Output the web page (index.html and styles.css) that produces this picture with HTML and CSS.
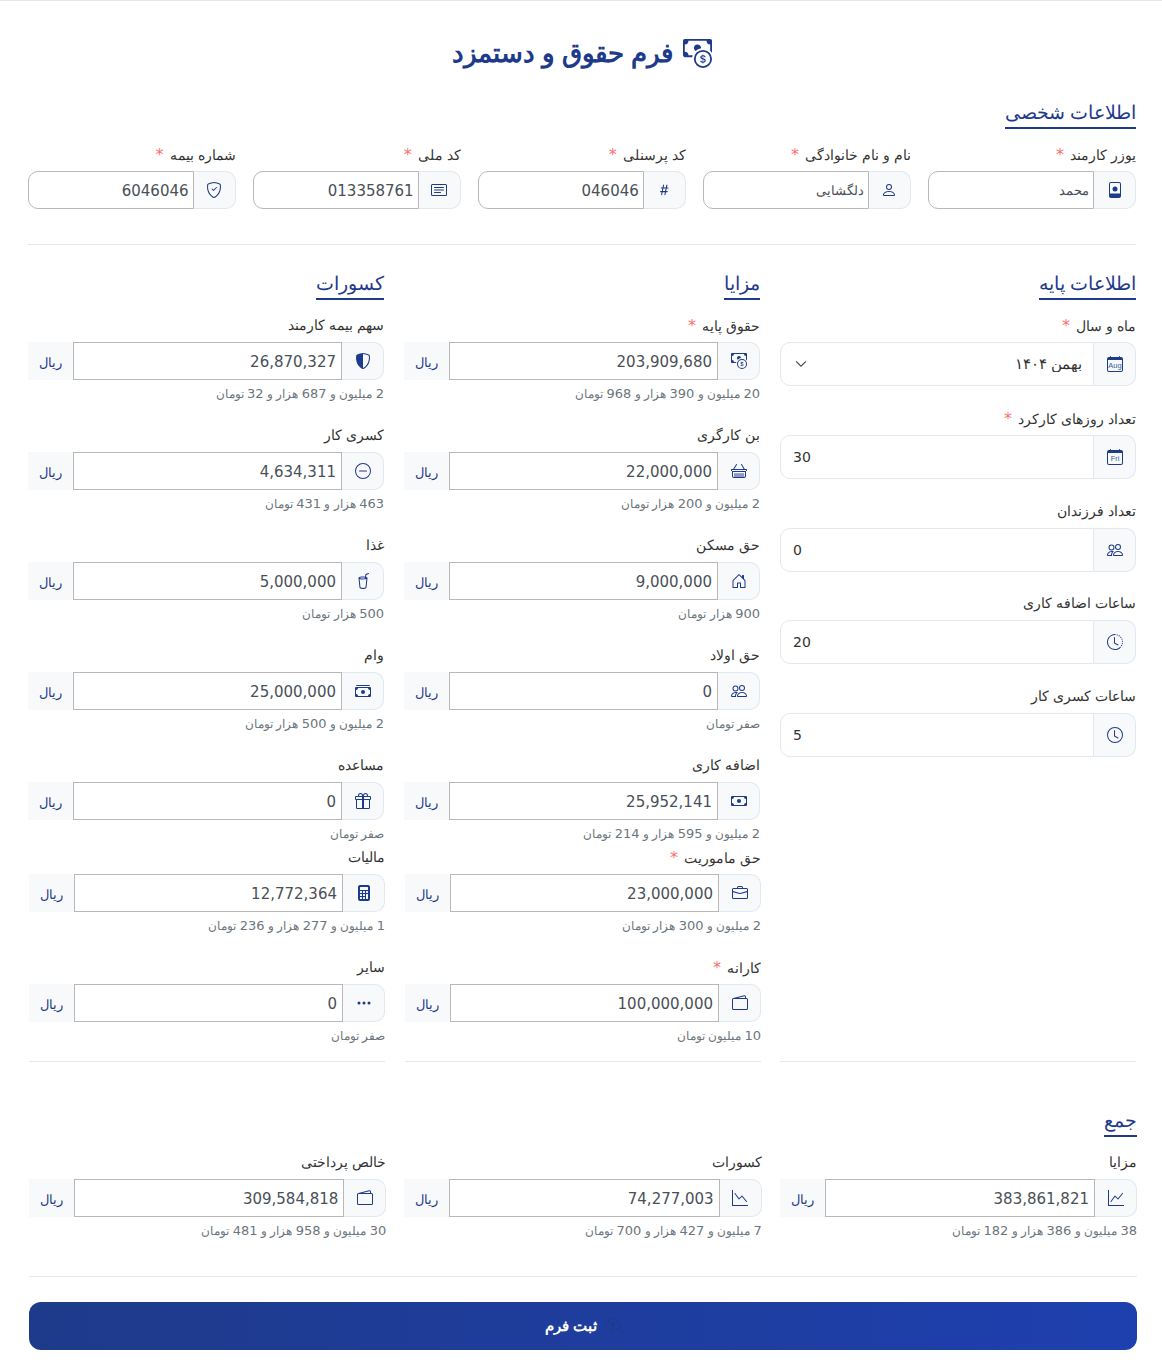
FILE: index.html
```html
<!DOCTYPE html>
<html lang="fa" dir="rtl">
<head>
    <meta charset="UTF-8">
    <meta name="viewport" content="width=device-width, initial-scale=1.0">
    <title>فرم حقوق و دستمزد</title>
    <link rel="stylesheet" href="styles.css">
</head>
<body>

<svg class="sprite" xmlns="http://www.w3.org/2000/svg">
    <symbol id="i-cash-coin" viewBox="0 0 16 16">
        <path fill-rule="evenodd" d="M11 15a4 4 0 1 0 0-8 4 4 0 0 0 0 8m5-4a5 5 0 1 1-10 0 5 5 0 0 1 10 0"/>
        <path d="M9.438 11.944c.047.596.518 1.06 1.363 1.116v.44h.375v-.443c.875-.061 1.386-.529 1.386-1.207 0-.618-.39-.936-1.09-1.1l-.296-.07v-1.2c.376.043.614.248.671.532h.658c-.047-.575-.54-1.024-1.329-1.073V8.5h-.375v.45c-.747.073-1.255.522-1.255 1.158 0 .562.378.92 1.007 1.066l.248.061v1.272c-.384-.058-.639-.27-.696-.563h-.668zm1.36-1.354c-.369-.085-.569-.26-.569-.522 0-.294.216-.514.572-.578v1.1zm.432.746c.449.104.655.272.655.569 0 .339-.257.571-.709.614v-1.195z"/>
        <path d="M1 0a1 1 0 0 0-1 1v8a1 1 0 0 0 1 1h4.083q.088-.517.258-1H3a2 2 0 0 0-2-2V3a2 2 0 0 0 2-2h10a2 2 0 0 0 2 2v3.528c.38.34.717.728 1 1.154V1a1 1 0 0 0-1-1z"/>
        <path d="M9.998 5.083 10 5a2 2 0 1 0-3.132 1.65 6 6 0 0 1 3.13-1.567"/>
    </symbol>
    <symbol id="i-badge" viewBox="0 0 16 16">
        <path fill-rule="evenodd" d="M4 0h8a2 2 0 0 1 2 2v12a2 2 0 0 1-2 2H4a2 2 0 0 1-2-2V2a2 2 0 0 1 2-2m0 1a1 1 0 0 0-1 1v9.500h10V2a1 1 0 0 0-1-1z"/>
        <circle cx="8" cy="7" r="2.500"/>
    </symbol>
    <symbol id="i-person" viewBox="0 0 16 16">
        <path d="M8 8a3 3 0 1 0 0-6 3 3 0 0 0 0 6m2-3a2 2 0 1 1-4 0 2 2 0 0 1 4 0m4 8c0 1-1 1-1 1H3s-1 0-1-1 1-4 6-4 6 3 6 4m-1-.004c-.001-.246-.154-.986-.832-1.664C11.516 10.68 10.289 10 8 10s-3.516.68-4.168 1.332c-.678.678-.83 1.418-.832 1.664z"/>
    </symbol>
    <symbol id="i-hash" viewBox="0 0 16 16">
        <path d="M8.390 12.648a1 1 0 0 0-.015.18c0 .305.21.508.5.508.266 0 .492-.172.555-.477l.554-2.703h1.204c.421 0 .617-.234.617-.547 0-.312-.188-.53-.617-.53h-.985l.516-2.524h1.265c.43 0 .618-.227.618-.547 0-.313-.188-.524-.618-.524h-1.046l.476-2.304a1 1 0 0 0 .016-.164.51.51 0 0 0-.516-.516.54.54 0 0 0-.539.43l-.523 2.554H7.617l.477-2.304c.008-.04.015-.118.015-.164a.51.51 0 0 0-.523-.516.54.54 0 0 0-.531.43L6.530 5.484H5.414c-.43 0-.617.22-.617.532s.187.539.617.539h.906l-.515 2.523H4.609c-.421 0-.609.219-.609.531s.188.547.61.547h.976l-.516 2.492c-.008.04-.015.125-.015.18 0 .305.21.508.5.508.265 0 .492-.172.554-.477l.555-2.703h2.242zm-1-6.109h2.266l-.515 2.563H6.859l.532-2.563z"/>
    </symbol>
    <symbol id="i-card-text" viewBox="0 0 16 16">
        <path d="M14.500 3a.5.5 0 0 1 .5.5v9a.5.5 0 0 1-.5.5h-13a.5.5 0 0 1-.5-.5v-9a.5.5 0 0 1 .5-.5zm-13-1A1.500 1.500 0 0 0 0 3.500v9A1.500 1.500 0 0 0 1.500 14h13a1.500 1.500 0 0 0 1.500-1.500v-9A1.500 1.500 0 0 0 14.500 2z"/>
        <path d="M3 5.500a.5.5 0 0 1 .5-.5h9a.5.5 0 0 1 0 1h-9a.5.5 0 0 1-.5-.5M3 8a.5.5 0 0 1 .5-.5h9a.5.5 0 0 1 0 1h-9A.5.5 0 0 1 3 8m0 2.500a.5.5 0 0 1 .5-.5h6a.5.5 0 0 1 0 1h-6a.5.5 0 0 1-.5-.5"/>
    </symbol>
    <symbol id="i-shield-check" viewBox="0 0 16 16">
        <path d="M5.338 1.590a61 61 0 0 0-2.837.856.48.48 0 0 0-.328.39c-.554 4.157.726 7.19 2.253 9.188a10.700 10.700 0 0 0 2.287 2.233c.346.244.652.42.893.533q.18.085.293.118a1 1 0 0 0 .101.025 1 1 0 0 0 .1-.025q.114-.034.294-.118c.24-.113.547-.29.893-.533a10.700 10.700 0 0 0 2.287-2.233c1.527-1.997 2.807-5.031 2.253-9.188a.48.48 0 0 0-.328-.39c-.651-.213-1.750-.56-2.837-.855C9.552 1.290 8.531 1.067 8 1.067c-.53 0-1.552.223-2.662.524zM5.072.56C6.157.265 7.310 0 8 0s1.843.265 2.928.56c1.110.3 2.229.655 2.887.87a1.540 1.540 0 0 1 1.044 1.262c.596 4.477-.787 7.795-2.465 9.990a11.800 11.800 0 0 1-2.517 2.453 7 7 0 0 1-1.048.625c-.28.132-.581.24-.829.24s-.548-.108-.829-.24a7 7 0 0 1-1.048-.625 11.800 11.800 0 0 1-2.517-2.453C1.928 10.487.545 7.169 1.141 2.692A1.540 1.540 0 0 1 2.185 1.430 63 63 0 0 1 5.072.56"/>
        <path d="M10.854 5.146a.5.5 0 0 1 0 .708l-3 3a.5.5 0 0 1-.708 0l-1.500-1.500a.5.5 0 1 1 .708-.708L7.500 7.793l2.646-2.647a.5.5 0 0 1 .708 0"/>
    </symbol>
    <symbol id="i-calendar" viewBox="0 0 16 16">
        <path d="M3.500 0a.5.5 0 0 1 .5.5V1h8V.5a.5.5 0 0 1 1 0V1h1a2 2 0 0 1 2 2v11a2 2 0 0 1-2 2H2a2 2 0 0 1-2-2V3a2 2 0 0 1 2-2h1V.5a.5.5 0 0 1 .5-.5M1 4v10a1 1 0 0 0 1 1h12a1 1 0 0 0 1-1V4z"/>
    </symbol>
    <symbol id="i-people" viewBox="0 0 16 16">
        <path d="M15 14s1 0 1-1-1-4-5-4-5 3-5 4 1 1 1 1zm-7.978-1L7 12.996c.001-.264.167-1.030.76-1.720C8.312 10.629 9.282 10 11 10c1.717 0 2.687.63 3.240 1.276.593.69.758 1.457.76 1.720l-.008.002-.014.002zM11 7a2 2 0 1 0 0-4 2 2 0 0 0 0 4m3-2a3 3 0 1 1-6 0 3 3 0 0 1 6 0M6.936 9.280a6 6 0 0 0-1.230-.247A7 7 0 0 0 5 9c-4 0-5 3-5 4q0 1 1 1h4.216A2.240 2.240 0 0 1 5 13c0-1.010.377-2.042 1.090-2.904.243-.294.526-.569.846-.816M4.920 10A5.500 5.500 0 0 0 4 13H1c0-.26.164-1.030.76-1.724.545-.636 1.492-1.256 3.160-1.275ZM1.500 5.500a3 3 0 1 1 6 0 3 3 0 0 1-6 0m3-2a2 2 0 1 0 0 4 2 2 0 0 0 0-4"/>
    </symbol>
    <symbol id="i-clock-history" viewBox="0 0 16 16">
        <path d="M8.515 1.019A7 7 0 0 0 8 1V0a8 8 0 0 1 .589.022zm2.004.45a7 7 0 0 0-.985-.299l.219-.976q.576.129 1.126.342zm1.370.71a7 7 0 0 0-.439-.27l.493-.87a8 8 0 0 1 .979.654l-.615.789a7 7 0 0 0-.418-.302zm1.834 1.790a7 7 0 0 0-.653-.796l.724-.69q.406.429.747.91zm.744 1.352a7 7 0 0 0-.214-.468l.893-.45a8 8 0 0 1 .45 1.088l-.95.313a7 7 0 0 0-.179-.483m.53 2.507a7 7 0 0 0-.1-1.025l.985-.17q.1.58.116 1.170zm-.131 1.538q.05-.254.081-.51l.993.123a8 8 0 0 1-.23 1.155l-.964-.267q.069-.247.12-.501m-.952 2.379q.276-.436.486-.908l.914.405q-.24.54-.555 1.038zm-.964 1.205q.183-.183.35-.378l.758.653a8 8 0 0 1-.401.432z"/>
        <path d="M8 1a7 7 0 1 0 4.950 11.950l.707.707A8.001 8.001 0 1 1 8 0z"/>
        <path d="M7.500 3a.5.5 0 0 1 .5.5v5.210l3.248 1.856a.5.5 0 0 1-.496.868l-3.500-2A.5.5 0 0 1 7 9V3.500a.5.5 0 0 1 .5-.5"/>
    </symbol>
    <symbol id="i-clock" viewBox="0 0 16 16">
        <path d="M8 3.500a.5.5 0 0 0-1 0V9a.5.5 0 0 0 .252.434l3.500 2a.5.5 0 0 0 .496-.868L8 8.710z"/>
        <path d="M8 16A8 8 0 1 0 8 0a8 8 0 0 0 0 16m7-8A7 7 0 1 1 1 8a7 7 0 0 1 14 0"/>
    </symbol>
    <symbol id="i-basket" viewBox="0 0 16 16">
        <path d="M5.757 1.071a.5.5 0 0 1 .172.686L3.383 6h9.234L10.070 1.757a.5.5 0 1 1 .858-.514L13.783 6H15.500a.5.5 0 0 1 .5.5v1a.5.5 0 0 1-.5.5H15v5a2 2 0 0 1-2 2H3a2 2 0 0 1-2-2V8H.5a.5.5 0 0 1-.5-.5v-1A.5.5 0 0 1 .5 6h1.717L5.070 1.243a.5.5 0 0 1 .686-.172zM2 9v4a1 1 0 0 0 1 1h10a1 1 0 0 0 1-1V9zM1 7v1h14V7zm3 3a.5.5 0 0 1 .5.5v3a.5.5 0 0 1-1 0v-3A.5.5 0 0 1 4 10m2 0a.5.5 0 0 1 .5.5v3a.5.5 0 0 1-1 0v-3A.5.5 0 0 1 6 10m2 0a.5.5 0 0 1 .5.5v3a.5.5 0 0 1-1 0v-3A.5.5 0 0 1 8 10m2 0a.5.5 0 0 1 .5.5v3a.5.5 0 0 1-1 0v-3a.5.5 0 0 1 .5-.5m2 0a.5.5 0 0 1 .5.5v3a.5.5 0 0 1-1 0v-3a.5.5 0 0 1 .5-.5"/>
    </symbol>
    <symbol id="i-house" viewBox="0 0 16 16">
        <path d="M8.354 1.146a.5.5 0 0 0-.708 0l-6 6A.5.5 0 0 0 1.500 7.500v7a.5.5 0 0 0 .5.5h4.500a.5.5 0 0 0 .5-.5v-4h2v4a.5.5 0 0 0 .5.5H14a.5.5 0 0 0 .5-.5v-7a.5.5 0 0 0-.146-.354L13 5.793V2.500a.5.5 0 0 0-.5-.5h-1a.5.5 0 0 0-.5.5v1.293zM2.500 14V7.707l5.500-5.500 5.500 5.500V14H10v-4a.5.5 0 0 0-.5-.5h-3a.5.5 0 0 0-.5.5v4z"/>
    </symbol>
    <symbol id="i-cash" viewBox="0 0 16 16">
        <path d="M8 10a2 2 0 1 0 0-4 2 2 0 0 0 0 4"/>
        <path d="M0 4a1 1 0 0 1 1-1h14a1 1 0 0 1 1 1v8a1 1 0 0 1-1 1H1a1 1 0 0 1-1-1zm3 0a2 2 0 0 1-2 2v4a2 2 0 0 1 2 2h10a2 2 0 0 1 2-2V6a2 2 0 0 1-2-2z"/>
    </symbol>
    <symbol id="i-cash-stack" viewBox="0 0 16 16">
        <path d="M1 3a1 1 0 0 1 1-1h12a1 1 0 0 1 1 1zm7 8a2 2 0 1 0 0-4 2 2 0 0 0 0 4"/>
        <path d="M0 5a1 1 0 0 1 1-1h14a1 1 0 0 1 1 1v8a1 1 0 0 1-1 1H1a1 1 0 0 1-1-1zm3 0a2 2 0 0 1-2 2v4a2 2 0 0 1 2 2h10a2 2 0 0 1 2-2V7a2 2 0 0 1-2-2z"/>
    </symbol>
    <symbol id="i-briefcase" viewBox="0 0 16 16">
        <path d="M6.500 1A1.500 1.500 0 0 0 5 2.500V3H1.500A1.500 1.500 0 0 0 0 4.500v8A1.500 1.500 0 0 0 1.500 14h13a1.500 1.500 0 0 0 1.500-1.500v-8A1.500 1.500 0 0 0 14.500 3H11v-.5A1.500 1.500 0 0 0 9.500 1zm0 1h3a.5.5 0 0 1 .5.5V3H6v-.5a.5.5 0 0 1 .5-.5m1.886 6.914L15 7.151V12.500a.5.5 0 0 1-.5.5h-13a.5.5 0 0 1-.5-.5V7.150l6.614 1.764a1.500 1.500 0 0 0 .772 0M1.500 4h13a.5.5 0 0 1 .5.5v1.616L8.129 7.948a.5.5 0 0 1-.258 0L1 6.116V4.500a.5.5 0 0 1 .5-.5"/>
    </symbol>
    <symbol id="i-wallet" viewBox="0 0 16 16">
        <path d="M12.136.326A1.500 1.500 0 0 1 14 1.780V3h.5A1.500 1.500 0 0 1 16 4.500v9a1.500 1.500 0 0 1-1.500 1.500h-13A1.500 1.500 0 0 1 0 13.500v-9a1.500 1.500 0 0 1 1.432-1.499zM5.562 3H13V1.780a.5.5 0 0 0-.621-.484zM1.500 4a.5.5 0 0 0-.5.5v9a.5.5 0 0 0 .5.5h13a.5.5 0 0 0 .5-.5v-9a.5.5 0 0 0-.5-.5z"/>
    </symbol>
    <symbol id="i-shield-shaded" viewBox="0 0 16 16">
        <path fill-rule="evenodd" d="M8 14.933a1 1 0 0 0 .1-.025q.114-.034.294-.118c.24-.113.547-.29.893-.533a10.700 10.700 0 0 0 2.287-2.233c1.527-1.997 2.807-5.031 2.253-9.188a.48.48 0 0 0-.328-.39c-.651-.213-1.750-.56-2.837-.855C9.552 1.290 8.531 1.067 8 1.067zM5.072.56C6.157.265 7.310 0 8 0s1.843.265 2.928.56c1.110.3 2.229.655 2.887.87a1.540 1.540 0 0 1 1.044 1.262c.596 4.477-.787 7.795-2.465 9.990a11.800 11.800 0 0 1-2.517 2.453 7 7 0 0 1-1.048.625c-.28.132-.581.24-.829.24s-.548-.108-.829-.24a7 7 0 0 1-1.048-.625 11.800 11.800 0 0 1-2.517-2.453C1.928 10.487.545 7.169 1.141 2.692A1.540 1.540 0 0 1 2.185 1.430 63 63 0 0 1 5.072.56"/>
    </symbol>
    <symbol id="i-dash-circle" viewBox="0 0 16 16">
        <path d="M8 15A7 7 0 1 1 8 1a7 7 0 0 1 0 14m0 1A8 8 0 1 0 8 0a8 8 0 0 0 0 16"/>
        <path d="M4 8a.5.5 0 0 1 .5-.5h7a.5.5 0 0 1 0 1h-7A.5.5 0 0 1 4 8"/>
    </symbol>
    <symbol id="i-cup-straw" viewBox="0 0 16 16">
        <path d="M13.902.334a.5.5 0 0 1-.28.65l-2.254.902-.4 1.927c.376.095.715.215.972.367.228.135.56.396.56.82q0 .069-.011.132l-.962 9.068a1.280 1.280 0 0 1-.524.93c-.488.34-1.494.87-3.010.87s-2.522-.53-3.010-.87a1.280 1.280 0 0 1-.524-.93L3.510 5.132A1 1 0 0 1 3.500 5c0-.424.332-.685.56-.82.262-.154.607-.276.99-.372C5.824 3.614 6.867 3.500 8 3.500c.712 0 1.389.045 1.985.127l.464-2.215a.5.5 0 0 1 .303-.356l2.500-1a.5.5 0 0 1 .65.278M9.768 4.607A14 14 0 0 0 8 4.500c-1.076 0-2.033.11-2.707.278A3.300 3.300 0 0 0 4.645 5c.146.073.362.15.648.222C5.967 5.390 6.924 5.500 8 5.500c.571 0 1.109-.03 1.588-.085zm.292 1.756C9.445 6.450 8.742 6.500 8 6.500c-1.133 0-2.176-.114-2.950-.308a6 6 0 0 1-.435-.127l.838 8.030c.013.121.06.186.102.215.357.249 1.168.69 2.438.69s2.081-.441 2.438-.69c.042-.029.09-.094.102-.215l.852-8.030a6 6 0 0 1-.435.127 9 9 0 0 1-.89.17z"/>
    </symbol>
    <symbol id="i-gift" viewBox="0 0 16 16">
        <path d="M3 2.500a2.500 2.500 0 0 1 5 0 2.500 2.500 0 0 1 5 0v.006c0 .07 0 .27-.038.494H15a1 1 0 0 1 1 1v2a1 1 0 0 1-1 1v7.500a1.500 1.500 0 0 1-1.500 1.500h-11A1.500 1.500 0 0 1 1 14.500V7a1 1 0 0 1-1-1V4a1 1 0 0 1 1-1h2.038A3 3 0 0 1 3 2.506zm1.068.5H7v-.5a1.500 1.500 0 1 0-3 0c0 .085.002.274.045.43zM9 3h2.932l.023-.07c.043-.156.045-.345.045-.43a1.500 1.500 0 0 0-3 0zM1 4v2h6V4zm8 0v2h6V4zm5 3H9v8h4.500a.5.5 0 0 0 .5-.5zm-7 8V7H2v7.500a.5.5 0 0 0 .5.5z"/>
    </symbol>
    <symbol id="i-calculator" viewBox="0 0 16 16">
        <path d="M2 2a2 2 0 0 1 2-2h8a2 2 0 0 1 2 2v12a2 2 0 0 1-2 2H4a2 2 0 0 1-2-2zm2 .5v2a.5.5 0 0 0 .5.5h7a.5.5 0 0 0 .5-.5v-2a.5.5 0 0 0-.5-.5h-7a.5.5 0 0 0-.5.5m0 4v1a.5.5 0 0 0 .5.5h1a.5.5 0 0 0 .5-.5v-1a.5.5 0 0 0-.5-.5h-1a.5.5 0 0 0-.5.5M4.500 9a.5.5 0 0 0-.5.5v1a.5.5 0 0 0 .5.5h1a.5.5 0 0 0 .5-.5v-1a.5.5 0 0 0-.5-.5zM4 12.500v1a.5.5 0 0 0 .5.5h1a.5.5 0 0 0 .5-.5v-1a.5.5 0 0 0-.5-.5h-1a.5.5 0 0 0-.5.5M7.500 6a.5.5 0 0 0-.5.5v1a.5.5 0 0 0 .5.5h1a.5.5 0 0 0 .5-.5v-1a.5.5 0 0 0-.5-.5zM7 9.500v1a.5.5 0 0 0 .5.5h1a.5.5 0 0 0 .5-.5v-1a.5.5 0 0 0-.5-.5h-1a.5.5 0 0 0-.5.5m.5 2.500a.5.5 0 0 0-.5.5v1a.5.5 0 0 0 .5.5h1a.5.5 0 0 0 .5-.5v-1a.5.5 0 0 0-.5-.5zM10 6.500v1a.5.5 0 0 0 .5.5h1a.5.5 0 0 0 .5-.5v-1a.5.5 0 0 0-.5-.5h-1a.5.5 0 0 0-.5.5m.5 2.500a.5.5 0 0 0-.5.5v4a.5.5 0 0 0 .5.5h1a.5.5 0 0 0 .5-.5v-4a.5.5 0 0 0-.5-.5z"/>
    </symbol>
    <symbol id="i-three-dots" viewBox="0 0 16 16">
        <path d="M3 9.500a1.500 1.500 0 1 1 0-3 1.500 1.500 0 0 1 0 3m5 0a1.500 1.500 0 1 1 0-3 1.500 1.500 0 0 1 0 3m5 0a1.500 1.500 0 1 1 0-3 1.500 1.500 0 0 1 0 3"/>
    </symbol>
    <symbol id="i-graph-up" viewBox="0 0 16 16">
        <path d="M0 0h1v15h15v1H0zm14.817 3.113a.5.5 0 0 1 .07.704l-4.500 5.500a.5.5 0 0 1-.74.037L7.060 6.767l-3.656 5.027a.5.5 0 0 1-.808-.588l4-5.500a.5.5 0 0 1 .758-.06l2.609 2.610 4.150-5.073a.5.5 0 0 1 .704-.07"/>
    </symbol>
    <symbol id="i-graph-down" viewBox="0 0 16 16">
        <path d="M0 0h1v15h15v1H0zm14.817 11.887a.5.5 0 0 0 .07-.704l-4.500-5.500a.5.5 0 0 0-.74-.037L7.060 8.233 3.404 3.206a.5.5 0 0 0-.808.588l4 5.500a.5.5 0 0 0 .758.06l2.609-2.610 4.150 5.073a.5.5 0 0 0 .704.07"/>
    </symbol>
    <symbol id="i-cloud-upload" viewBox="0 0 16 16">
        <path d="M4.406 1.342A5.530 5.530 0 0 1 8 0c2.690 0 4.923 2 5.166 4.579C14.758 4.804 16 6.137 16 7.773 16 9.569 14.502 11 12.687 11H10a.5.5 0 0 1 0-1h2.688C13.979 10 15 8.988 15 7.773c0-1.216-1.020-2.228-2.313-2.228h-.5v-.5C12.188 2.825 10.328 1 8 1a4.530 4.530 0 0 0-2.941 1.100c-.757.652-1.153 1.438-1.153 2.055v.448l-.445.049C2.064 4.805 1 5.952 1 7.318 1 8.785 2.230 10 3.781 10H6a.5.5 0 0 1 0 1H3.781C1.708 11 0 9.366 0 7.318c0-1.763 1.266-3.223 2.942-3.593.143-.863.698-1.723 1.464-2.383"/>
        <path d="M7.646 4.146a.5.5 0 0 1 .708 0l3 3a.5.5 0 0 1-.708.708L8.500 5.707V14.500a.5.5 0 0 1-1 0V5.707L5.354 7.854a.5.5 0 1 1-.708-.708z"/>
    </symbol>
    <symbol id="i-chevron" viewBox="0 0 16 16">
        <path fill-rule="evenodd" d="M1.646 4.646a.5.5 0 0 1 .708 0L8 10.293l5.646-5.647a.5.5 0 0 1 .708.708l-6 6a.5.5 0 0 1-.708 0l-6-6a.5.5 0 0 1 0-.708"/>
    </symbol>
</svg>

<form class="card">
    <h1 class="page-title">
        <svg class="title-icon"><use href="#i-cash-coin"/></svg>
        <span>فرم حقوق و دستمزد</span>
    </h1>

    <h2 class="section-title">اطلاعات شخصی</h2>
    <div class="personal-grid">
        <div class="field">
            <label>یوزر کارمند <span class="req">*</span></label>
            <div class="group"><span class="addon"><svg class="icon"><use href="#i-badge"/></svg></span><input class="control" value="محمد"></div>
        </div>
        <div class="field">
            <label>نام و نام خانوادگی <span class="req">*</span></label>
            <div class="group"><span class="addon"><svg class="icon"><use href="#i-person"/></svg></span><input class="control" value="دلگشایی"></div>
        </div>
        <div class="field">
            <label>کد پرسنلی <span class="req">*</span></label>
            <div class="group"><span class="addon"><svg class="icon"><use href="#i-hash"/></svg></span><input class="control num" value="046046"></div>
        </div>
        <div class="field">
            <label>کد ملی <span class="req">*</span></label>
            <div class="group"><span class="addon"><svg class="icon"><use href="#i-card-text"/></svg></span><input class="control num" value="013358761"></div>
        </div>
        <div class="field">
            <label>شماره بیمه <span class="req">*</span></label>
            <div class="group"><span class="addon"><svg class="icon"><use href="#i-shield-check"/></svg></span><input class="control num" value="6046046"></div>
        </div>
    </div>

    <hr class="divider personal-divider">

    <div class="columns">
        <!-- base info -->
        <div class="col">
            <h2 class="section-title">اطلاعات پایه</h2>
            <div class="base-field">
                <label>ماه و سال <span class="req">*</span></label>
                <div class="group tall">
                    <span class="addon"><svg class="icon"><use href="#i-calendar"/></svg><svg class="cal-text" viewBox="0 0 16 16"><text x="8" y="11.800">Aug</text></svg></span>
                    <select class="control"><option>بهمن ۱۴۰۴</option></select>
                    <svg class="chevron"><use href="#i-chevron"/></svg>
                </div>
            </div>
            <div class="base-field">
                <label>تعداد روزهای کارکرد <span class="req">*</span></label>
                <div class="group tall">
                    <span class="addon"><svg class="icon"><use href="#i-calendar"/></svg><svg class="cal-text" viewBox="0 0 16 16"><text x="8" y="11.800">Fri</text></svg></span>
                    <input class="control num" value="30">
                </div>
            </div>
            <div class="base-field">
                <label>تعداد فرزندان</label>
                <div class="group tall"><span class="addon"><svg class="icon"><use href="#i-people"/></svg></span><input class="control num" value="0"></div>
            </div>
            <div class="base-field">
                <label>ساعات اضافه کاری</label>
                <div class="group tall"><span class="addon"><svg class="icon"><use href="#i-clock-history"/></svg></span><input class="control num" value="20"></div>
            </div>
            <div class="base-field">
                <label>ساعات کسری کار</label>
                <div class="group tall"><span class="addon"><svg class="icon"><use href="#i-clock"/></svg></span><input class="control num" value="5"></div>
            </div>
            <hr class="divider col-divider shifted">
        </div>

        <!-- benefits -->
        <div class="col">
            <h2 class="section-title">مزایا</h2>
            <div class="field money">
                <label>حقوق پایه <span class="req">*</span></label>
                <div class="group"><span class="addon"><svg class="icon"><use href="#i-cash-coin"/></svg></span><input class="control num" value="203,909,680"><span class="unit">ریال</span></div>
                <p class="hint"><span class="num">20</span> میلیون و <span class="num">390</span> هزار و <span class="num">968</span> تومان</p>
            </div>
            <div class="field money">
                <label>بن کارگری</label>
                <div class="group"><span class="addon"><svg class="icon"><use href="#i-basket"/></svg></span><input class="control num" value="22,000,000"><span class="unit">ریال</span></div>
                <p class="hint"><span class="num">2</span> میلیون و <span class="num">200</span> هزار تومان</p>
            </div>
            <div class="field money">
                <label>حق مسکن</label>
                <div class="group"><span class="addon"><svg class="icon"><use href="#i-house"/></svg></span><input class="control num" value="9,000,000"><span class="unit">ریال</span></div>
                <p class="hint"><span class="num">900</span> هزار تومان</p>
            </div>
            <div class="field money">
                <label>حق اولاد</label>
                <div class="group"><span class="addon"><svg class="icon"><use href="#i-people"/></svg></span><input class="control num" value="0"><span class="unit">ریال</span></div>
                <p class="hint">صفر تومان</p>
            </div>
            <div class="field">
                <label>اضافه کاری</label>
                <div class="group"><span class="addon"><svg class="icon"><use href="#i-cash"/></svg></span><input class="control num" value="25,952,141"><span class="unit">ریال</span></div>
                <p class="hint"><span class="num">2</span> میلیون و <span class="num">595</span> هزار و <span class="num">214</span> تومان</p>
            </div>
            <div class="shifted">
                <div class="field money">
                    <label>حق ماموریت <span class="req">*</span></label>
                    <div class="group"><span class="addon"><svg class="icon"><use href="#i-briefcase"/></svg></span><input class="control num" value="23,000,000"><span class="unit">ریال</span></div>
                    <p class="hint"><span class="num">2</span> میلیون و <span class="num">300</span> هزار تومان</p>
                </div>
                <div class="field">
                    <label>کارانه <span class="req">*</span></label>
                    <div class="group"><span class="addon"><svg class="icon"><use href="#i-wallet"/></svg></span><input class="control num" value="100,000,000"><span class="unit">ریال</span></div>
                    <p class="hint"><span class="num">10</span> میلیون تومان</p>
                </div>
                <hr class="divider col-divider">
            </div>
        </div>

        <!-- deductions -->
        <div class="col">
            <h2 class="section-title">کسورات</h2>
            <div class="field money">
                <label>سهم بیمه کارمند</label>
                <div class="group"><span class="addon"><svg class="icon"><use href="#i-shield-shaded"/></svg></span><input class="control num" value="26,870,327"><span class="unit">ریال</span></div>
                <p class="hint"><span class="num">2</span> میلیون و <span class="num">687</span> هزار و <span class="num">32</span> تومان</p>
            </div>
            <div class="field money">
                <label>کسری کار</label>
                <div class="group"><span class="addon"><svg class="icon"><use href="#i-dash-circle"/></svg></span><input class="control num" value="4,634,311"><span class="unit">ریال</span></div>
                <p class="hint"><span class="num">463</span> هزار و <span class="num">431</span> تومان</p>
            </div>
            <div class="field money">
                <label>غذا</label>
                <div class="group"><span class="addon"><svg class="icon"><use href="#i-cup-straw"/></svg></span><input class="control num" value="5,000,000"><span class="unit">ریال</span></div>
                <p class="hint"><span class="num">500</span> هزار تومان</p>
            </div>
            <div class="field money">
                <label>وام</label>
                <div class="group"><span class="addon"><svg class="icon"><use href="#i-cash-stack"/></svg></span><input class="control num" value="25,000,000"><span class="unit">ریال</span></div>
                <p class="hint"><span class="num">2</span> میلیون و <span class="num">500</span> هزار تومان</p>
            </div>
            <div class="field">
                <label>مساعده</label>
                <div class="group"><span class="addon"><svg class="icon"><use href="#i-gift"/></svg></span><input class="control num" value="0"><span class="unit">ریال</span></div>
                <p class="hint">صفر تومان</p>
            </div>
            <div class="shifted">
                <div class="field money">
                    <label>مالیات</label>
                    <div class="group"><span class="addon"><svg class="icon"><use href="#i-calculator"/></svg></span><input class="control num" value="12,772,364"><span class="unit">ریال</span></div>
                    <p class="hint"><span class="num">1</span> میلیون و <span class="num">277</span> هزار و <span class="num">236</span> تومان</p>
                </div>
                <div class="field">
                    <label>سایر</label>
                    <div class="group"><span class="addon"><svg class="icon"><use href="#i-three-dots"/></svg></span><input class="control num" value="0"><span class="unit">ریال</span></div>
                    <p class="hint">صفر تومان</p>
                </div>
                <hr class="divider col-divider">
            </div>
        </div>
    </div>

    <div class="shifted totals">
        <h2 class="section-title">جمع</h2>
        <div class="totals-grid">
            <div class="field">
                <label>مزایا</label>
                <div class="group"><span class="addon"><svg class="icon"><use href="#i-graph-up"/></svg></span><input class="control num" value="383,861,821"><span class="unit">ریال</span></div>
                <p class="hint"><span class="num">38</span> میلیون و <span class="num">386</span> هزار و <span class="num">182</span> تومان</p>
            </div>
            <div class="field">
                <label>کسورات</label>
                <div class="group"><span class="addon"><svg class="icon"><use href="#i-graph-down"/></svg></span><input class="control num" value="74,277,003"><span class="unit">ریال</span></div>
                <p class="hint"><span class="num">7</span> میلیون و <span class="num">427</span> هزار و <span class="num">700</span> تومان</p>
            </div>
            <div class="field">
                <label>خالص پرداختی</label>
                <div class="group"><span class="addon"><svg class="icon"><use href="#i-wallet"/></svg></span><input class="control num" value="309,584,818"><span class="unit">ریال</span></div>
                <p class="hint"><span class="num">30</span> میلیون و <span class="num">958</span> هزار و <span class="num">481</span> تومان</p>
            </div>
        </div>
        <hr class="divider totals-divider">
        <button class="submit" type="button">
            <svg class="icon"><use href="#i-cloud-upload"/></svg>
            <span>ثبت فرم</span>
        </button>
    </div>
</form>

</body>
</html>
```

FILE: styles.css
```css
body {
    font-family: sans-serif;
    margin: 0;
    background-color: #fff;
    color: #333;
}

.sprite {
    display: none;
}

/* latin digits keep the wide face, persian falls back to the system one */
.num {
    font-family: 'DejaVu Sans', sans-serif;
}

.card {
    border-top: 1px solid #e5e7eb;
    padding: 37px 26px 17px 28px;
}

.page-title {
    display: flex;
    justify-content: center;
    align-items: center;
    gap: 10px;
    height: 30px;
    margin: 0 0 31px;
    font-size: 26.200px;
    font-weight: 700;
    color: #1e3a8a;
}

.title-icon {
    width: 29px;
    height: 29px;
    fill: #1e3a8a;
}

.section-title {
    width: fit-content;
    margin: 0 0 16px;
    font-size: 19.200px;
    font-weight: 400;
    line-height: 28px;
    color: #1e3a8a;
    border-bottom: 2px solid #1e3a8a;
}

.personal-grid {
    display: grid;
    grid-template-columns: repeat(5, minmax(0, 1fr));
    gap: 17.600px;
}

.columns {
    display: grid;
    grid-template-columns: repeat(3, 356px);
    gap: 20px;
}

.totals-grid {
    display: grid;
    grid-template-columns: repeat(3, minmax(0, 1fr));
    gap: 18px;
}

/* rows at the bottom of the form sit one pixel over */
.shifted {
    margin-left: 1px;
    margin-right: -1px;
}

label {
    display: block;
    height: 20px;
    margin-bottom: 6px;
    font-size: 14.400px;
    line-height: 19px;
    color: #333;
}

.req {
    margin-right: 2px;
    font-family: 'DejaVu Sans', sans-serif;
    font-size: 16px;
    color: #f87171;
}

.money {
    margin-bottom: 18px;
}

.base-field {
    margin-bottom: 22.750px;
}

.base-field label {
    margin-bottom: 6px;
}

.group {
    position: relative;
    display: flex;
    height: 38px;
}

.group.tall {
    height: 44px;
}

.addon {
    position: relative;
    flex: 0 0 42px;
    display: flex;
    align-items: center;
    justify-content: center;
    box-sizing: border-box;
    background-color: #f8f9fa;
    border: 1px solid #e2e8f0;
    border-left: none;
    border-radius: 0 10px 10px 0;
}

.icon {
    width: 16px;
    height: 16px;
    fill: #1e3a8a;
}

.cal-text {
    position: absolute;
    top: 50%;
    left: 50%;
    width: 16px;
    height: 16px;
    margin: -8px 0 0 -8px;
    direction: ltr;
    font-family: 'Liberation Sans', sans-serif;
    fill: #3d5a9e;
    font-size: 7.500px;
    text-anchor: middle;
}

.control {
    flex: 1;
    min-width: 0;
    box-sizing: border-box;
    padding: 1px 5px 0;
    background-color: #fff;
    border: 1px solid #b8b8b8;
    border-radius: 10px 0 0 10px;
    font-family: sans-serif;
    font-size: 13px;
    color: #495057;
    text-align: right;
    outline: none;
}

.personal-grid .control {
    padding: 1px 4px 0;
}

.control.num {
    font-family: 'DejaVu Sans', sans-serif;
    font-size: 15px;
}

.tall .control.num {
    padding: 0 12px;
    border-color: #e2e8f0;
    font-size: 14px;
    color: #333;
    text-align: left;
}

.tall select.control {
    padding: 0 11px 2px;
    border-color: #e2e8f0;
    appearance: none;
    font-size: 15px;
    color: #333;
    text-align: right;
}

.chevron {
    position: absolute;
    left: 15px;
    top: 15px;
    width: 12px;
    height: 14px;
    fill: #343a40;
    stroke: #343a40;
    stroke-width: 0.6;
}

.money .control,
.col > .field .control,
.shifted .field .control {
    border-radius: 0;
}

.unit {
    flex: 0 0 45px;
    display: flex;
    align-items: center;
    justify-content: center;
    padding-top: 3px;
    box-sizing: border-box;
    background-color: #f8f9fa;
    font-size: 13px;
    color: #1e3a8a;
}

.hint {
    margin: 0;
    padding: 4px 0;
    font-size: 12.200px;
    line-height: 20px;
    color: #6c757d;
}

.hint .num {
    font-size: 13px;
}

.divider {
    height: 1px;
    margin: 0;
    border: none;
    background-color: #e2e8f0;
}

.personal-divider {
    margin: 35px 0 25px;
}

.col {
    display: flex;
    flex-direction: column;
}

.col-divider {
    margin-top: 11px;
}

.col > .col-divider {
    margin-top: auto;
}

.totals {
    margin-top: 45px;
}

.totals-divider {
    margin: 31px 0 25px;
}

.submit {
    display: flex;
    justify-content: center;
    align-items: center;
    gap: 8px;
    width: 100%;
    height: 48px;
    border: none;
    border-radius: 12px;
    background: linear-gradient(to left, #1e40af, #1e3a8a);
    font-family: sans-serif;
    font-size: 15px;
    font-weight: 700;
    color: #fff;
    cursor: pointer;
}

.submit .icon {
    fill: #1e3a8a;
}
```
